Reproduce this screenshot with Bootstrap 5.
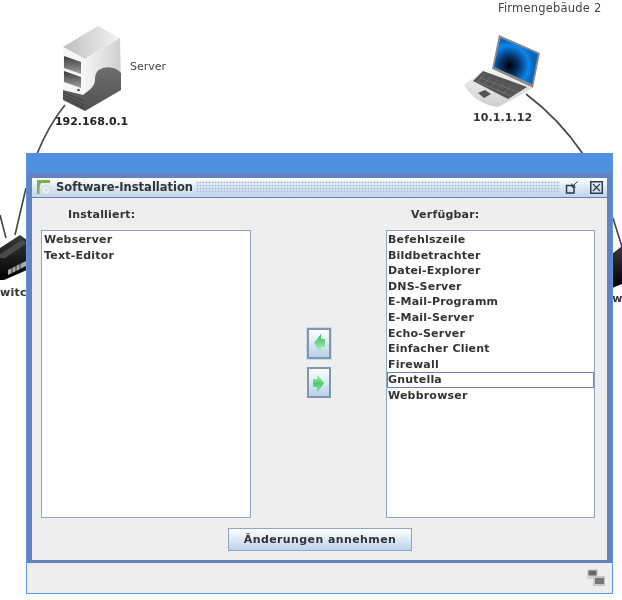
<!DOCTYPE html>
<html lang="de"><head><meta charset="utf-8"><title>Software-Installation</title>
<link href="https://cdn.jsdelivr.net/npm/bootstrap@5.3.0/dist/css/bootstrap.min.css" rel="stylesheet">
<style>
html,body{margin:0;width:622px;height:600px;overflow:hidden;background:#fff}
body{font-family:"DejaVu Sans",sans-serif;font-weight:700;font-size:11px;color:#333;position:relative;filter:blur(.35px)}
.net-canvas{position:absolute;left:0;top:0}
.node-text{position:absolute;white-space:nowrap;line-height:14px}
.node-text.thin{font-weight:400;font-size:11.5px;color:#444;letter-spacing:.2px}
.node-text.thin.short{letter-spacing:0;font-size:11px}
.sim-window{position:absolute;left:26px;top:153px;width:587px;height:441px;border:1px solid #5a97e4;border-top:0;background:#eee}
.sim-head{height:20px;background:#5090e0}
.sim-frame{background:#6382bf;padding:5px 5px 3px;height:390px}
.sim-title{height:20px;background:linear-gradient(#fff,#d9e5f3 55%,#c3d5ea);border-bottom:1px solid #6382bf;padding:0 4px 0 5px;font-size:11.5px;color:#333}
.sim-title svg{flex:none}
.title-dots{background-image:radial-gradient(#b7c9e2 45%,transparent 55%);background-size:3px 3px;height:13px;margin-left:3px;margin-right:5px}
.title-close{margin-left:12px}
.sim-body{height:362px;background:#eee;padding:8px 12px 9px 9px}
.col-side{width:210px}
.col-side.narrow{width:209px}
.col-side.narrow .list-group-item{padding-left:1px}
.col-head{height:24px;line-height:17px;font-size:11px;letter-spacing:.2px;color:#333}
.col-head.one{padding-left:27px}.col-head.two{padding-left:25px}
.sim-list{height:288px;border:1px solid #8ea6c5;border-radius:0;background:#fff;padding:1px 0 0}
.sim-list .list-group-item{border:0;border-radius:0;padding:0 2px;height:15.6px;line-height:15.6px;background:transparent;color:#333;font-size:11px;letter-spacing:.2px}
.sim-list .list-group-item.picked{outline:1px solid #6382bf;outline-offset:-1px;height:16px}
.arrow-col{padding-top:2px}
.arrow-btn{width:24px;height:31px;padding:0;border:2px solid #7f95b2;border-radius:0;background:linear-gradient(#fff,#b9d0e8)}
.arrow-btn:first-child{box-shadow:0 0 0 1px #ccd9ea}
.apply-row{margin-top:10px;padding-left:4px}
.sim-apply{width:184px;height:23px;padding:0;border:1px solid #8fa7c4;border-radius:0;background:linear-gradient(#fff,#bcd2ea);color:#333;font-weight:700;font-size:11px;letter-spacing:.4px;line-height:21px;display:block}
.sim-status{height:29px;padding:6px 7px 0 0}
</style></head><body>
<svg class="net-canvas" width="622" height="600" viewBox="0 0 622 600" aria-hidden="true">
<defs>
<linearGradient id="srvTop" x1="0" y1="0" x2="1" y2="0"><stop offset="0" stop-color="#bdbdbd"/><stop offset="1" stop-color="#f4f4f4"/></linearGradient>
<linearGradient id="srvRight" x1="0" y1="0" x2="1" y2="0"><stop offset="0" stop-color="#f4f4f4"/><stop offset="1" stop-color="#cfcfcf"/></linearGradient>
<linearGradient id="srvSlot" x1="0" y1="0" x2="0" y2="1"><stop offset="0" stop-color="#3c3c3c"/><stop offset="1" stop-color="#a0a0a0"/></linearGradient>
<linearGradient id="srvBase" x1="0" y1="0" x2="0" y2="1"><stop offset="0" stop-color="#6e6e6e"/><stop offset="1" stop-color="#505050"/></linearGradient>
<radialGradient id="lapScreen" cx=".35" cy=".6" r=".55"><stop offset="0" stop-color="#000"/><stop offset=".4" stop-color="#04356f"/><stop offset=".8" stop-color="#0c86ea"/><stop offset="1" stop-color="#0a66bb"/></radialGradient>
<linearGradient id="lapBase" x1="0" y1="0" x2="0" y2="1"><stop offset="0" stop-color="#f4f4f4"/><stop offset="1" stop-color="#cfcfcf"/></linearGradient>
<linearGradient id="swBody" x1="0" y1="0" x2="0" y2="1"><stop offset="0" stop-color="#3a3a3a"/><stop offset="1" stop-color="#000"/></linearGradient>
</defs>
<g fill="none" stroke="#444" stroke-width="1.6">
<path d="M65 105C56 116 45 134 37 154"/>
<path d="M526 94C550 112 568 132 583 154"/>
<path d="M26 188L15 235"/>
<path d="M0 215L6 238"/>
<path d="M613 218L622 247"/>
</g>
<!-- server -->
<path d="M63 47L98 26L120 38L85 59Z" fill="url(#srvTop)"/>
<path d="M85 59L120 38L121 90L85 111Z" fill="url(#srvRight)"/>
<path d="M63 47L85 59L85 111L63 100Z" fill="#f6f6f6"/>
<path d="M85 111L121 90L121 73C117 68 110 66 103 68C96 70 95 75 95 80C95 87 88 91 83 95L63 90L63 100Z" fill="url(#srvBase)"/>
<path d="M64 56L81 62L81 74L64 68Z" fill="url(#srvSlot)"/>
<path d="M64 71L81 77L81 88L64 82Z" fill="url(#srvSlot)"/>
<circle cx="78.500" cy="90" r="1.300" fill="#444"/>
<path d="M63 92L84 101M63 95L84 105M63 98L84 108" stroke="#333" stroke-width=".7" fill="none"/>
<!-- laptop -->
<path d="M499 35L540 53L533 88L492 69Z" fill="#8a8a8a"/>
<path d="M500.500 38L538 54L532 84L494 67Z" fill="url(#lapScreen)"/>
<path d="M464 85L483 70L492 69L533 88L498 107C485 106 470 97 464 85Z" fill="url(#lapBase)"/>
<path d="M473 81L483 71L527 87L508 99Z" fill="#555"/>
<path d="M478 82L484 74M484 85L490 77M490 88L497 80M497 91L504 83M503 94L511 86M480 78L518 92M476 81L511 96" stroke="#808080" stroke-width=".6"/>
<path d="M478 93L485 90L491 94L484 98Z" fill="#555"/>
<!-- switches -->
<path d="M0 248L20 235L27 240L27 270L4 280L0 280Z" fill="url(#swBody)"/>
<path d="M0 254L22 240L27 243L5 258L0 258Z" fill="#4a4a4a"/>
<path d="M8 270L26 261L26 266L8 275Z" fill="#aaa"/>
<path d="M12 268V273M16 266V271M20 264V269" stroke="#333" stroke-width="1" fill="none"/>
<path d="M622 246L612 254L612 288L622 284Z" fill="url(#swBody)"/>
</svg>
<div class="node-text thin short" style="left:130px;top:60px">Server</div>
<div class="node-text thin" style="left:498px;top:1px">Firmengebäude 2</div>
<div class="node-text" style="left:55px;top:115px;color:#222;letter-spacing:-.05px">192.168.0.1</div>
<div class="node-text" style="left:473px;top:111px;letter-spacing:.1px">10.1.1.12</div>
<div class="node-text" style="left:0;top:286px;letter-spacing:.3px">witc</div>
<div class="node-text" style="left:608px;top:292px">.w</div>

<div class="sim-window d-flex flex-column">
  <div class="sim-head"></div>
  <div class="sim-frame">
    <div class="sim-title d-flex align-items-center">
      <svg width="15" height="15" viewBox="0 0 15 15" aria-hidden="true"><path d="M0 0H13V3H4C2.500 5 2.500 9 2.500 14H0Z" fill="#7fae4a"/><circle cx="9" cy="10" r="4.500" fill="#e8eef5" stroke="#b9c6d6" stroke-width=".6"/><circle cx="9" cy="10" r="1" fill="#fff" stroke="#aab" stroke-width=".5"/></svg>
      <span class="ms-1">Software-Installation</span>
      <span class="title-dots flex-grow-1"></span>
      <svg width="13" height="13" viewBox="0 0 13 13" aria-hidden="true"><path d="M1.500 4.500H9V12H1.500Z" fill="none" stroke="#2d3a4d" stroke-width="1.500"/><path d="M12.500 .5L7 6M7 2.500V6H10.500" fill="none" stroke="#2d3a4d"/></svg>
      <svg class="title-close" width="13" height="13" viewBox="0 0 13 13" aria-hidden="true"><rect x=".75" y=".75" width="11.500" height="11.500" fill="none" stroke="#2d3a4d" stroke-width="1.500"/><path d="M3 3L10 10M10 3L3 10" stroke="#2d3a4d" stroke-width="1.200"/></svg>
    </div>
    <div class="sim-body">
      <div class="d-flex">
        <div class="col-side">
          <div class="col-head one">Installiert:</div>
          <div class="list-group sim-list">
            <div class="list-group-item">Webserver</div>
            <div class="list-group-item">Text-Editor</div>
          </div>
        </div>
        <div class="flex-grow-1 d-flex flex-column align-items-center justify-content-center gap-2 arrow-col">
          <button class="btn arrow-btn d-flex align-items-center justify-content-center" aria-label="Links"><svg width="14" height="24" viewBox="0 0 14 24"><defs><linearGradient id="ga" x1="0" y1="0" x2="0" y2="1"><stop offset="0" stop-color="#2fbf55"/><stop offset="1" stop-color="#c9f3cf"/></linearGradient></defs><path d="M2 11L9 2V7H13V15H9V22Z" fill="url(#ga)"/></svg></button>
          <button class="btn arrow-btn d-flex align-items-center justify-content-center" aria-label="Rechts"><svg width="14" height="24" viewBox="0 0 14 24"><defs><linearGradient id="gb" x1="0" y1="0" x2="0" y2="1"><stop offset="0" stop-color="#c9f3cf"/><stop offset=".5" stop-color="#46d068"/><stop offset="1" stop-color="#8be69b"/></linearGradient></defs><path d="M12 12L5 3V8H1V16H5V22Z" fill="url(#gb)"/></svg></button>
        </div>
        <div class="col-side narrow">
          <div class="col-head two">Verfügbar:</div>
          <div class="list-group sim-list">
            <div class="list-group-item">Befehlszeile</div>
            <div class="list-group-item">Bildbetrachter</div>
            <div class="list-group-item">Datei-Explorer</div>
            <div class="list-group-item">DNS-Server</div>
            <div class="list-group-item">E-Mail-Programm</div>
            <div class="list-group-item">E-Mail-Server</div>
            <div class="list-group-item">Echo-Server</div>
            <div class="list-group-item">Einfacher Client</div>
            <div class="list-group-item">Firewall</div>
            <div class="list-group-item picked">Gnutella</div>
            <div class="list-group-item">Webbrowser</div>
          </div>
        </div>
      </div>
      <div class="d-flex justify-content-center apply-row"><button class="btn sim-apply">Änderungen annehmen</button></div>
    </div>
  </div>
  <div class="sim-status d-flex justify-content-end">
    <svg width="18" height="17" viewBox="0 0 18 17" aria-hidden="true"><rect x="0" y="0" width="11" height="10" fill="#d4d4d4"/><rect x="1.500" y="1.500" width="8" height="5" fill="#666"/><rect x="6" y="7" width="12" height="10" fill="#c8c8c8"/><rect x="8" y="9" width="9" height="6" fill="#777"/></svg>
  </div>
</div>
</body></html>
